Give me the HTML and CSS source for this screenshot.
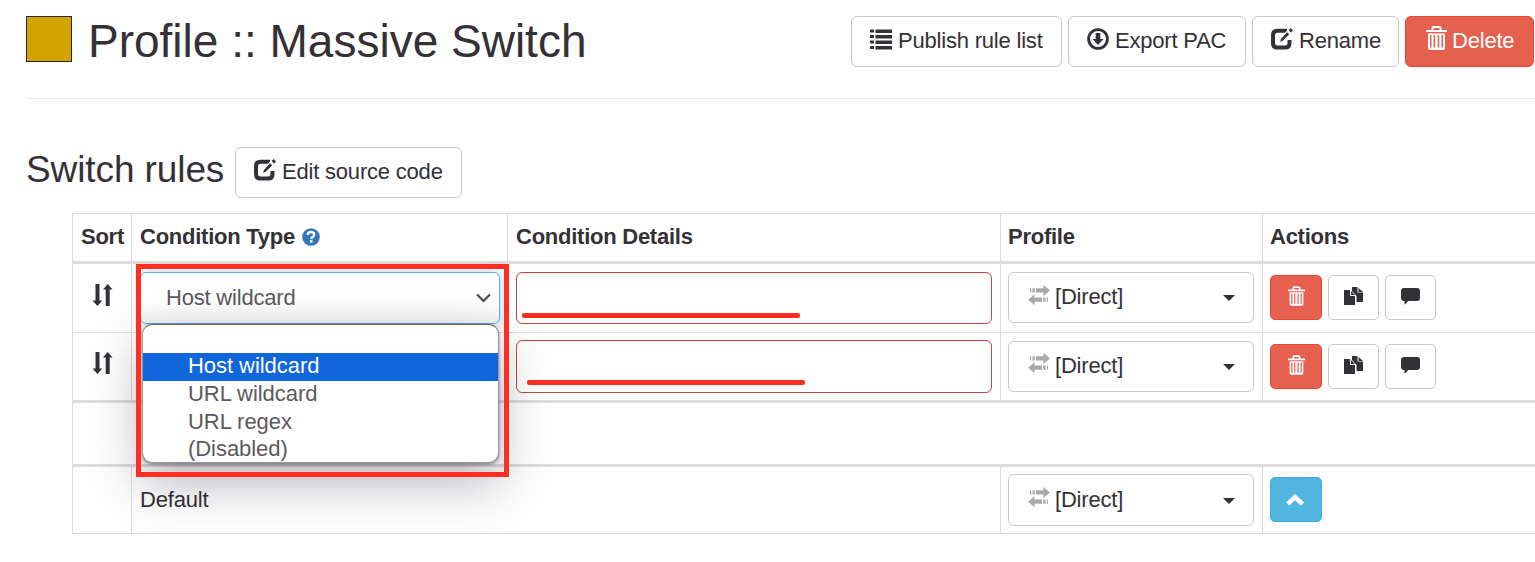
FILE: index.html
```html
<!DOCTYPE html>
<html lang="en">
<head>
  <meta charset="UTF-8"/>
  <meta name="viewport" content="width=device-width,initial-scale=1"/>
  <title>Profile :: Massive Switch</title>
  <link rel="stylesheet" href="styles.css">
</head>
<body>

  <!-- Icon set -->
  <svg class="sprite">
    <symbol id="i-list" viewBox="0 0 22 22">
      <path d="M0 1.500h4v3H0zM5.500 1.500H22v3.500H5.500zM0 7h4v3H0zM5.500 7H22v3.500H5.500zM0 12.500h4v3H0zM5.500 12.500H22V16H5.500zM0 18h4v3H0zM5.500 18H22v3.500H5.500z"/>
    </symbol>
    <symbol id="i-download" viewBox="0 0 22 22">
      <circle cx="11" cy="11" r="9.400" fill="none" stroke="currentColor" stroke-width="2.800"/>
      <path d="M8.700 5h4.600v6h3.200L11 17 5.500 11h3.200z"/>
    </symbol>
    <symbol id="i-edit" viewBox="0 0 22 22">
      <path d="M16 2.800H6.500Q2 2.800 2 7v8.200q0 4.300 4.300 4.300h7.900q4.300 0 4.300-4.300V12" fill="none" stroke="currentColor" stroke-width="4"/>
      <path d="M16 3.300l3 3.100-7.200 7-3.400 1.200 1-3.700z" stroke="#fefefe" stroke-width="1.100"/>
      <path d="M19.600 0L22 2.400l-2 2L17.600 2z"/>
    </symbol>
    <symbol id="i-trash" viewBox="0 0 21 24">
      <path d="M5.500 4V2q0-2 2-2h6q2 0 2 2v2H21v2H0V4zM7.500 4h6V2h-6z" fill-rule="evenodd"/>
      <path d="M2 7.500h17V22q0 2-2 2H4q-2 0-2-2zM4 9v12.500h1.500V9zM7.600 9v12.500h1.500V9zM11.700 9v12.500h1.500V9zM15.500 9v12.500H17V9z" fill-rule="evenodd"/>
    </symbol>
    <symbol id="i-sort" viewBox="0 0 20 22">
      <path d="M3 0h4v16.500h2.800L5 22 0 16.500h3zM13.200 22h4V5.500H20L15.200 0 10.500 5.500h2.700z"/>
    </symbol>
    <symbol id="i-help" viewBox="0 0 18 18">
      <circle cx="9" cy="9" r="8.800"/>
      <path d="M5.800 7q0-3 3.200-3t3.200 2.500q0 1.300-1.400 2.200T9.200 11" fill="none" stroke="#fff" stroke-width="2.300"/>
      <path d="M7.900 12.200h2.600v2.500H7.900z" fill="#fff"/>
    </symbol>
    <symbol id="i-transfer" viewBox="0 0 22 20">
      <path d="M2 3.200h1.200v4.300H2zM4.500 3.200h2.300v4.300H4.500zM8 3.200h7.500V0L22 5.500 15.500 11V7.500H8zM20 12.500h-1.200v4.300H20zM17.500 12.500h-2.300v4.300h2.300zM14 12.500H6.500V9.300L0 14.700 6.500 20v-3.200H14z"/>
    </symbol>
    <symbol id="i-copy" viewBox="0 0 19 18">
      <path d="M8 0h5.500v5.500H19V15h-6.500V9L8 4zM14.500 1L19 5h-4.500z"/>
      <path d="M0 3h6v6h5v9H0zM7 4l4 4H7z"/>
    </symbol>
    <symbol id="i-comment" viewBox="0 0 19 18">
      <path d="M3 1h13q3 0 3 3v7q0 3-3 3H7.500L3.500 17.800V14H3q-3 0-3-3V4q0-3 3-3z"/>
    </symbol>
    <symbol id="i-up" viewBox="0 0 18 12">
      <path d="M9 0l9 8.500-3.200 3L9 6.200l-5.800 5.300-3.200-3z"/>
    </symbol>
  </svg>

  <div class="page-header">
    <span class="swatch"></span>
    <h1>Profile :: Massive Switch</h1>
    <div class="toolbar">
      <button class="btn btn-publish"><svg class="icon"><use href="#i-list"/></svg>Publish rule list</button>
      <button class="btn btn-export"><svg class="icon"><use href="#i-download"/></svg>Export PAC</button>
      <button class="btn btn-rename"><svg class="icon"><use href="#i-edit"/></svg>Rename</button>
      <button class="btn btn-delete danger"><svg class="icon icon-trash"><use href="#i-trash"/></svg>Delete</button>
    </div>
  </div>

  <div class="section-title">
    <h2>Switch rules</h2>
    <button class="btn btn-source"><svg class="icon"><use href="#i-edit"/></svg>Edit source code</button>
  </div>

  <div class="rules">
    <div class="row head">
      <div class="cell">Sort</div>
      <div class="cell">Condition Type <svg class="help"><use href="#i-help"/></svg></div>
      <div class="cell">Condition Details</div>
      <div class="cell profile">Profile</div>
      <div class="cell profile">Actions</div>
    </div>

    <div class="row rule first">
      <div class="cell sort"><svg><use href="#i-sort"/></svg></div>
      <div class="cell type">
        <div class="select">Host wildcard
          <svg class="chevron" viewBox="0 0 14 9"><path d="M1 1.200l6 6 6-6"/></svg>
        </div>
        <div class="menu">
          <div class="option"></div>
          <div class="option active">Host wildcard</div>
          <div class="option">URL wildcard</div>
          <div class="option">URL regex</div>
          <div class="option">(Disabled)</div>
        </div>
        <div class="frame"></div>
      </div>
      <div class="cell details"><div class="input"><span class="mark"></span></div></div>
      <div class="cell profile"><div class="dropdown"><svg class="transfer"><use href="#i-transfer"/></svg>[Direct]<span class="caret"></span></div></div>
      <div class="cell actions">
        <button class="btn small danger"><svg class="s-trash"><use href="#i-trash"/></svg></button>
        <button class="btn small"><svg class="s-icon"><use href="#i-copy"/></svg></button>
        <button class="btn small"><svg class="s-icon"><use href="#i-comment"/></svg></button>
      </div>
    </div>

    <div class="row rule second">
      <div class="cell sort"><svg><use href="#i-sort"/></svg></div>
      <div class="cell"></div>
      <div class="cell details"><div class="input"><span class="mark"></span></div></div>
      <div class="cell profile"><div class="dropdown"><svg class="transfer"><use href="#i-transfer"/></svg>[Direct]<span class="caret"></span></div></div>
      <div class="cell actions">
        <button class="btn small danger"><svg class="s-trash"><use href="#i-trash"/></svg></button>
        <button class="btn small"><svg class="s-icon"><use href="#i-copy"/></svg></button>
        <button class="btn small"><svg class="s-icon"><use href="#i-comment"/></svg></button>
      </div>
    </div>

    <div class="row spacer"></div>

    <div class="row default">
      <div class="cell"></div>
      <div class="cell wide">Default</div>
      <div class="cell profile"><div class="dropdown"><svg class="transfer"><use href="#i-transfer"/></svg>[Direct]<span class="caret"></span></div></div>
      <div class="cell actions">
        <button class="btn small info"><svg class="s-up"><use href="#i-up"/></svg></button>
      </div>
    </div>
  </div>

</body>
</html>
```
FILE: styles.css
```css
* { box-sizing: border-box; }
body {
  margin: 0; height: 562px; overflow: hidden;
  background: #fefefe; color: #333136;
  font-family: "Liberation Sans", Arial, sans-serif;
  font-size: 22px; line-height: 30px; letter-spacing: -0.2px;
}
h1, h2 { margin: 0; font-weight: normal; white-space: nowrap; }
svg { fill: currentColor; flex-shrink: 0; }
.sprite { display: none; }

/* header */
.page-header {
  display: flex; align-items: flex-start;
  height: 83px; margin: 16px 0 0 26px;
  border-bottom: 1px solid #ececee;
}
.swatch { width: 46px; height: 46px; background: #d3a300; border: 1px solid #29262b; }
h1 { margin-left: 16px; font-size: 46px; line-height: 51px; }
h1 { letter-spacing: 0; }
.toolbar { display: flex; gap: 6px; margin: 0 1px 0 auto; }

.btn {
  display: flex; align-items: center; flex-shrink: 0;
  height: 51px; padding: 0 0 2px 18px;
  background: #fefefe; border: 1px solid #c9c8cb; border-radius: 6px;
  color: #333136; font: inherit; letter-spacing: inherit; white-space: nowrap;
}
.icon { width: 22px; height: 22px; margin: 0 6px 3px 0; }
.icon-trash { width: 21px; height: 24px; margin: 0 5px 5px 2px; }
.btn-publish { width: 211px; }
.btn-export { width: 178px; }
.btn-rename { width: 147px; }
.btn-delete { width: 129px; }
.btn-source { width: 227px; }
.btn.danger { background: #e6604f; border-color: #e14a31; color: #fff; }
.btn.info { background: #53b6e1; border-color: #36ace0; color: #fff; }

.section-title { display: flex; height: 66px; margin: 48px 0 0 26px; }
h2 { width: 209px; font-size: 37px; line-height: 46px; letter-spacing: -0.1px; }

/* rules table */
.rules { margin-left: 72px; border: 1px solid #dcdbdd; border-right: 0; height: 321px; }
.row { display: grid; grid-template-columns: 58px 376px 493px 262px 1fr; }
.cell { border-left: 1px solid #dcdbdd; padding: 8px 7px 0 8px; min-width: 0; }
.cell:first-child { border-left: 0; }
.details { padding-right: 8px; }
.profile { padding: 8px 8px 0 7px; }
.head { height: 50px; border-bottom: 3px solid #dcdbdd; font-weight: bold; letter-spacing: -0.25px; }
.head .cell { display: flex; align-items: flex-start; white-space: nowrap; }
.help { width: 18px; height: 18px; margin: 6px 0 0 7px; color: #3176b9; }
.rule.first { height: 69px; border-bottom: 1px solid #dcdbdd; }
.rule.second { height: 70px; border-bottom: 3px solid #dcdbdd; }
.spacer { height: 64px; border-bottom: 3px solid #dcdbdd; }
.default { height: 66px; grid-template-columns: 58px 869px 262px 1fr; }
.wide { padding-top: 18px; }

.sort svg { display: block; width: 21px; height: 22px; margin: 12px 0 0 11px; }
.second .sort svg { margin-top: 11px; }
.input { height: 52px; border: 1px solid #bd4b45; border-radius: 6px; box-shadow: inset 0 1px 1px rgba(0,0,0,.06); padding: 40px 0 0 5px; }
.second .input { height: 53px; margin-top: -1px; padding: 39px 0 0 10px; }
.mark { display: block; width: 278px; height: 5px; border-radius: 2px; background: #ff2e22; }
.dropdown {
  display: flex; align-items: center;
  height: 51px; padding: 0 18px 2px 19px;
  border: 1px solid #c9c8cb; border-radius: 6px;
}
.second .transfer { margin-bottom: 6px; }
.default .dropdown { height: 52px; margin-top: -1px; padding-bottom: 1px; }
.transfer { width: 22px; height: 20px; margin: 0 5px 4px 0; color: #a9a8aa; }
.default .transfer { margin-bottom: 6px; }
.caret { margin: 3px 0 0 auto; border: 6px solid transparent; border-top-color: #333136; border-bottom: 0; }

.actions { display: flex; gap: 6px; padding: 11px 0 0 7px; }
.small { width: 51px; height: 45px; padding: 0 0 4px; justify-content: center; border-radius: 5px; }
.small.danger, .small.info { width: 52px; }
.s-trash { width: 17px; height: 20px; }
.s-icon { width: 19px; height: 18px; }
.s-up { width: 18px; height: 12px; margin: 4px 2px 0 0; }
.default .actions { padding-top: 10px; }

/* open select */
.type { position: relative; }
.select {
  display: flex; align-items: center; justify-content: space-between;
  height: 52px; padding: 0 8px 1px 25px;
  background: linear-gradient(#fefefe 60%, #f1f0f2); border: 1px solid #66a9e3; border-radius: 6px;
  box-shadow: 0 0 12px rgba(102,175,233,.5);
  color: #5b595d;
}
.chevron { width: 15px; height: 10px; margin-top: 1px; fill: none; stroke: #49474b; stroke-width: 2; }
.menu {
  position: absolute; left: 10px; top: 60px; z-index: 1;
  width: 357px; height: 139px;
  background: #fefefe; border: 1px solid #99979b; border-top-color: #67656a; border-radius: 10px;
  box-shadow: 0 1px 3px rgba(0,0,0,.45), 0 20px 50px rgba(20,10,30,.3);
  color: #5b595d; letter-spacing: -0.05px;
}
.option { height: 27.5px; padding-left: 45px; line-height: 25px; }
.option:first-child { height: 28px; }
.option.active { height: 28px; line-height: 26px; background: #1266dc; color: #fefefe; }
.frame { position: absolute; left: 4px; top: 0; z-index: 2; width: 373px; height: 213px; border: 5px solid #ff2e22; }
```
